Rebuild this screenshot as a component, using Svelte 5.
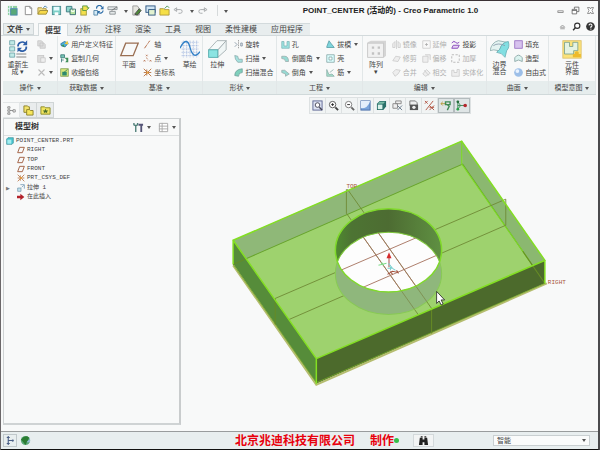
<script>
	const icons = {
		app: '<rect x="1" y="1" width="10" height="10" fill="#8fd0a0"/><path d="M3 1v10M6 1v10M1 4h10M1 8h10" stroke="#e6f3ff"/><rect x="4" y="4" width="7" height="7" fill="#58a978" stroke="#4d88b0"/>',
		page: '<path d="M2.500 1.500h5l2 2v7h-7z" fill="#fff" stroke="#888"/><path d="M7.500 1.500v2h2" fill="none" stroke="#888"/>',
		open: '<path d="M1 10V3h4l1 1h4v2" fill="#f2e08a" stroke="#a8933f"/><path d="M1 10l2-4h9l-2 4z" fill="#f7d94a" stroke="#9f8e38"/><path d="M7 3l2-2 2 2" fill="none" stroke="#3a78a8"/>',
		save: '<rect x="1.500" y="1.500" width="9" height="9" fill="#7fd0c8" stroke="#4f8f94"/><rect x="3" y="2" width="6" height="4" fill="#e9fbff"/><rect x="4" y="8" width="4" height="3" fill="#fff"/>',
		saveAs: '<path d="M1.500 1.500h6v6h-6z" fill="#8fd6cd" stroke="#3b7a80"/><path d="M5.500 4.500h6v6h-6z" fill="#b7e3a0" stroke="#356b6e"/><path d="M7 5v2h3V5" stroke="#fff" fill="none"/>',
		note: '<rect x="2" y="4" width="6" height="7" fill="#f3e04c" stroke="#a39a40"/><path d="M4 6V1h5v2h2L8 6z" fill="#f2e150" stroke="#5a9a42"/>',
		regen: '<path d="M1 6h4v5H1z" fill="#d5eaf5" stroke="#5587a8"/><path d="M4 4a3 3 0 0 1 6-1M11 6a3 3 0 0 1-5 2" fill="none" stroke="#2b6ca8" stroke-width="1.300"/><path d="M11.500 1v3.500H8zM5 10V6.500h3z" fill="#2b6ca8"/>',
		windowIcon: '<path d="M1 2h10v3H1zM3 7h6v3H3z" fill="#e5e9ea" stroke="#8d9598"/><path d="M5 6l6-4" stroke="#777"/>',
		pick: '<path d="M2 1h5l2 3v7H2z" fill="#e6e6e0" stroke="#999"/><path d="M4 10l5-6 2 2-4 5z" fill="#4e8a38" stroke="#444"/>',
		view: '<rect x="1" y="1" width="10" height="7" fill="#cfe4f3" stroke="#2d5580"/><rect x="4" y="5" width="7" height="6" fill="#e2f2d0" stroke="#2d5580"/>',
		folder: '<path d="M1 4h4l1 1h5v6H1z" fill="#f5df47" stroke="#b09a3c"/><path d="M6 4l3-3 2 2" fill="none" stroke="#459050"/>',
		undo: '<path d="M1 5l3-2v4zM3 5h5a2 2 0 0 1 0 4H6" fill="none" stroke="#a5a9ab"/>',
		redo: '<path d="M11 5L8 3v4zM9 5H4a2 2 0 0 0 0 4h2" fill="none" stroke="#a5a9ab"/>',
		min: '<rect x="2.500" y="6.500" width="7" height="2" fill="#fff" stroke="#777"/>',
		restore: '<path d="M4.500 4V1.500h6v6H8" fill="none" stroke="#555"/><path d="M1.500 4.500h6v6h-6zM1.500 6h6" fill="#fff" stroke="#555"/>',
		close: '<path d="M2 2h3l1 2 1-2h3L8 6l2 4H7L6 8l-1 2H2l2-4z" fill="#fff" stroke="#777"/>',
		up: '<path d="M3 7l3-3 3 3zM3 9h6" fill="none" stroke="#888"/>',
		search: '<circle cx="7" cy="5" r="3.500" fill="#fff" stroke="#333" stroke-width="1.500"/><path d="M4.500 7.500L1.500 11" stroke="#333" stroke-width="2"/>',
		help: '<circle cx="6" cy="6" r="5.800" fill="#333"/><path d="M4 4.500a2 2 0 1 1 2.500 2V8" fill="none" stroke="#fff" stroke-width="1.400"/><rect x="5.800" y="8.800" width="1.400" height="1.400" fill="#fff"/>',
		bigRegen: '<path d="M1 1h3v2.500H1zM1 4.700h3v2.500H1zM1 8.400h3v2.500H1z" fill="#bfe9e6" stroke="#6fa4a8" stroke-width=".5"/><path d="M5 9h6M5 10.800h6" stroke="#888" stroke-width=".6"/><path d="M6 4.500A2.500 2.500 0 0 1 10.200 2.500M11 4.500a2.500 2.500 0 0 1-4.300 2" fill="none" stroke="#2c5ea8"/><path d="M11.500.8v3H8.800zM5.700 8V5.300h2.700z" fill="#2c5ea8"/>',
		bigPlane: '<path d="M1 10L4 2.500h7.500L8.500 10z" fill="none" stroke="#9a6f53" stroke-width=".8"/>',
		bigSketch: '<path d="M2 1v10M4 1v10M6 1v10M8 1v10M10 1v10M1 2h10M1 4h10M1 6h10M1 8h10M1 10h10" stroke="#7f9bd4" stroke-width=".4" stroke-dasharray=".6 .6"/><path d="M0 5.500C3-.5 5 1 6 5s3 7 6 2.500" fill="none" stroke="#2f7fc6" stroke-width=".8"/>',
		bigExtrude: '<path d="M6.500 11V6.500L11.500 1v5.500z" fill="#f0f6f6" stroke="#9eaaac" stroke-width=".5"/><path d="M1 6.500L6 1h5.500l-5 5.500z" fill="#f6fafa" stroke="#9eaaac" stroke-width=".5"/><rect x="1" y="6.500" width="5.500" height="4.500" fill="#8be4e2" stroke="#4ba6a8" stroke-width=".5"/>',
		bigPattern: '<path d="M1 2l2-1h9v9l-1 1H1z" fill="#d5d5d5"/><rect x="1" y="2.500" width="9.500" height="8.500" fill="#f1f1f1" stroke="#c5c5c5" stroke-width=".5"/><path d="M3.500 4.500h1.400v1.400H3.500zM7 4.500h1.400v1.400H7zM3.500 8h1.400v1.400H3.500zM7 8h1.400v1.400H7z" fill="#c2c2c2"/>',
		bigBlend: '<path d="M0 7q1-5 5-6l5 1q-4 1-4.500 6L5 7q-3-1-5 0z" fill="#e4f3f1" stroke="#8cacac" stroke-width=".5"/><path d="M6 6q1-4 5-4.500Q12 5 10 7l-1 4Q7 8 4 8z" fill="#82dfe2" stroke="#68b0b4" stroke-width=".5"/><path d="M2 4q3-2 7 0" fill="none" stroke="#89a" stroke-width=".5"/>',
		bigComponent: '<rect x=".500" y="1" width="11" height="10.500" fill="#fbe27a" stroke="#dcc06c" stroke-width=".5"/><path d="M1.500 2h3v2.500h2V2h3v5H7v2H1.500z" fill="#e5f3e2" stroke="#7aa08a" stroke-width=".5"/><path d="M6.500 11V9h1.300a1.200 1.200 0 1 1 2.200 0h1.300v2z" fill="#eebb2b"/>',
		copy: '<path d="M1 1h5l2 2v5H1zM4 4h5l2 2v5H4z" fill="#ddd" stroke="#c4c4c4"/>',
		paste: '<rect x="1" y="2" width="8" height="9" fill="#ddd" stroke="#c4c4c4"/><path d="M5 5h6v6H5z" fill="#eee" stroke="#c4c4c4"/>',
		del: '<path d="M2 2l8 8M10 2l-8 8" stroke="#bbb" stroke-width="1.500"/>',
		udf: '<path d="M1 5l5-3 5 2-4 5-5-1z" fill="#4faed8" stroke="#236a9a"/><path d="M6 5l4-4 1 5z" fill="#f3c83c"/><path d="M2 7l3-1 1 4z" fill="#3b9b52"/>',
		copyGeo: '<path d="M1 1h5v4H1zM2 6v5M2 8h3" fill="#79c5b5" stroke="#2f6f6f"/><path d="M6 5h5v6H7l2-3z" fill="#3f8f59"/>',
		shrink: '<rect x="1" y="1" width="10" height="10" fill="#d7e77c" stroke="#7a9a49"/><path d="M3 5h6v5H3z" fill="#2d8b6e"/><path d="M5 6l5-4" stroke="#275"/>',
		axis: '<path d="M2 11L9 1" stroke="#b36a45" stroke-width="1.300" stroke-dasharray="5 1 2 1"/>',
		points: '<path d="M4 1l2 2M6 1L4 3M1 8l2 2M3 8l-2 2M9 8l2 2M11 8l-2 2M4 5l2 1M6 8h1" stroke="#b36a45"/>',
		csys: '<path d="M1 1l10 10M11 1L1 11M1 6h10M5 2v8" stroke="#b5703f" stroke-width="1.200"/><circle cx="6" cy="6" r="1.500" fill="#e8a23c"/>',
		revolve: '<path d="M6 0v12" stroke="#888" stroke-dasharray="2 1"/><path d="M1 3l3 3-3 3M9 4h2v4H9z" fill="none" stroke="#789"/>',
		sweep: '<path d="M1 2l4 1 1 4h5v4H5L2 7z" fill="#a6e2df" stroke="#8aa8aa"/>',
		sweepBlend: '<path d="M1 10q0-8 10-9v5q-5 0-5 5z" fill="#7fd0bc" stroke="#6c9c98"/>',
		hole: '<path d="M1 2v9h10V2H8v6H4V2z" fill="#9be3e1" stroke="#7fb4b6"/>',
		round: '<path d="M1 3h4q5 0 5 7H6Q6 6 1 6z" fill="#97dbd4" stroke="#98aaaa"/>',
		chamfer: '<path d="M1 3h4l6 5-5 3V8L1 6z" fill="#97dbd4" stroke="#98aaaa"/>',
		draft: '<path d="M1 9l3-8 3 4 4 5H1z" fill="#7ed5dc" stroke="#4f98a2"/>',
		shell: '<path d="M1 1h10v10H1z" fill="#dff" stroke="#7fa0a0"/><path d="M4 4h4v4H4z" fill="#fff" stroke="#7fa0a0"/>',
		rib: '<path d="M1 2v9h10L8 8 4 9zM5 6l5-4" fill="#a6e2cc" stroke="#8aaca8"/>',
		mirror: '<path d="M6 0v12M1 10V5l3-3v8zM11 10V5L8 2v8z" fill="#eee" stroke="#c8c8c8"/>',
		trim: '<path d="M1 9l4-6 6 1-3 6z" fill="#eee" stroke="#c8c8c8"/>',
		merge: '<path d="M1 6l4-4 6 1-3 5-4 3z" fill="#eee" stroke="#c8c8c8"/>',
		extend: '<path d="M1 1h10v10H1z" fill="#f8f8f8" stroke="#c8c8c8"/><path d="M4 6h4M6 4v4" stroke="#aaa"/>',
		offset: '<path d="M1 3h7v8H1zM4 1h7v7" fill="#eee" stroke="#c8c8c8"/>',
		intersect: '<path d="M1 8l5-6 5 5-6 4zM3 3l6 7" fill="#eee" stroke="#c8c8c8"/>',
		project: '<path d="M1 4q3-4 5-1t5 0M1 11l2-4h8l-2 4z" fill="#e8d5f5" stroke="#8a50bc" stroke-width="1.300"/>',
		thicken: '<path d="M1 1h10v10H1z" fill="none" stroke="#aaa" stroke-dasharray="3 2"/>',
		solidify: '<path d="M1 3h3v3h4V2h3v9H1z" fill="#eee" stroke="#c8c8c8"/>',
		fill: '<rect x="1" y="1" width="10" height="10" fill="#d7c2ee" stroke="#8d60bc"/>',
		style: '<path d="M1 10V5q5-7 10 0v5q-5-4-10 0z" fill="#dbf3ef" stroke="#7b9a9a"/>',
		freestyle: '<circle cx="6" cy="6" r="5.800" fill="#9dbfe8"/><circle cx="4.500" cy="4" r="2.500" fill="#e9f3ff"/>',
		tree: '<path d="M1 1h3v2H1zM1 5h3v2H1zM1 9h3v2H1zM8 5h3v3H8zM4 6h4" fill="#fff" stroke="#777"/>',
		folders: '<path d="M1 1h4l1 1h1v6H1z" fill="#f2e36b" stroke="#8b8027"/><path d="M4 5h3l1 1h3v5H4z" fill="#f6e65d" stroke="#8b8027"/>',
		fav: '<path d="M1 2h4l1 1h5v7H1z" fill="#f0e45f" stroke="#8b8a2b"/><path d="M6 4l1 2h2L7.500 7.500 8 9 6 8 4 9l.5-1.500L3 6h2z" fill="#4c6f2b"/>',
		tools: '<path d="M3 4v7M1 1v2l2 1 2-1V1" fill="none" stroke="#4f7f78" stroke-width="1.500"/><path d="M9 4v7M6 3h5" stroke="#557" stroke-width="2"/>',
		columns: '<path d="M1.500 1.500h9v9h-9zM1 4.500h10M1 7.500h10M4.500 1v10" fill="#fff" stroke="#aaa"/>',
		part: '<path d="M1 3l2-2h8v8l-2 2H1z" fill="#48c5cf" stroke="#3a8c96"/><path d="M2 4h6v6H2z" fill="#a5edf0"/>',
		plane: '<path d="M1 10l3-8h7l-3 8z" fill="none" stroke="#9a5433" stroke-width="1.300"/>',
		extrude: '<path d="M1 6h5v5H1z" fill="#c4e4ef" stroke="#6c93a8"/><path d="M5 1h6v6M7 5l3-3" fill="none" stroke="#5a86a8"/>',
		insert: '<path d="M0 4h5V1l6 5-6 5V8H0z" fill="#b3222b"/>',
		fit: '<rect x="1" y="1" width="10" height="10" fill="#dde3f2" stroke="#5b6592"/><circle cx="6" cy="5.500" r="2.500" fill="#fff" stroke="#445"/><path d="M8 8l3 3" stroke="#445" stroke-width="1.500"/>',
		zoomIn: '<circle cx="5" cy="5" r="3.500" fill="#fff" stroke="#555"/><path d="M3.500 5h3M5 3.500v3" stroke="#222"/><path d="M8 8l3 3" stroke="#444" stroke-width="2"/>',
		zoomOut: '<circle cx="5" cy="5" r="3.500" fill="#fff" stroke="#777"/><path d="M3.500 5h3" stroke="#222"/><path d="M8 8l3 3" stroke="#666" stroke-width="2"/>',
		repaint: '<rect x="1" y="1" width="10" height="10" fill="#7aa3db" stroke="#4d6faa"/><path d="M1 1h10Q9 9 1 9z" fill="#e4eefb"/>',
		shade: '<path d="M1 4l3-3h7v6l-3 4H1z" fill="#29706a"/><path d="M2 5h5v5H2z" fill="#d9f2ea"/><path d="M2 4l2-2h6L8 4z" fill="#7bbca8"/>',
		saved: '<path d="M4 1h6v3H4zM1 4h5v5H1z" fill="#eee" stroke="#888"/><path d="M6 6l5 5M11 6l-5 5" stroke="#678"/>',
		camera: '<path d="M2 1h6l2 2v3H2z" fill="#eee" stroke="#777"/><rect x="2" y="5" width="9" height="6" fill="#555"/><circle cx="6.500" cy="8" r="1.800" fill="#eee"/>',
		datum: '<path d="M1 1l3 3M4 1L1 4M10 1L2 11M6 6l5 5M11 6l-5 5M6 8h5" stroke="#b05240"/>',
		annot: '<path d="M1 4h6M3 2L1 4l2 2" stroke="#b69b3a" fill="none"/><path d="M6 2h5v3H6zM8 5l2 2-2 4" fill="none" stroke="#3f8b55" stroke-width="1.500"/>',
		spin: '<path d="M2 1v10M2 6h7M2 2l3 4-3 4" stroke="#3c8a56" fill="none"/><circle cx="2" cy="2" r="1.500" fill="#256b3b"/><circle cx="2" cy="10" r="1.500" fill="#2aa04a"/><circle cx="10" cy="6" r="2" fill="#b3272d"/>',
		navToggle: '<path d="M3 0v12M1 2h4M1 10h4M3 6h6" stroke="#4b5f86" stroke-width="1.500"/><circle cx="9" cy="6" r="1.500" fill="#4b5f86"/>',
		globe: '<circle cx="6" cy="6" r="5" fill="#5aa878"/><path d="M1 5q5-6 9-2L6 11 3 7z" fill="#2b7c32"/><path d="M7 8l4-4v4z" fill="#93b9d8"/>',
		find: '<path d="M2 3h3v2h2V3h3l1 8H7V8H5v3H1z" fill="#222"/><path d="M3 1h2v2H3zM7 1h2v2H7z" fill="#555"/>'
	};

	const quick = ['app', 'page', 'open', 'save', 'saveAs', 'note', 'regen', 'windowIcon', '', 'pick', 'view', 'folder', 'undo', '', 'redo', ''];
	const tabs = ['分析', '注释', '渲染', '工具', '视图', '柔性建模', '应用程序'];

	// stacks: [icon, label, has menu, greyed]
	const groups = [
		{ name: '操作', parts: [
			{ big: 'bigRegen', lines: ['重新生', '成 ▾'] },
			{ rows: [['copy', '', false, true], ['paste', '', true, true], ['del', '', true, true]] }
		] },
		{ name: '获取数据', parts: [
			{ rows: [['udf', '用户定义特征'], ['copyGeo', '复制几何'], ['shrink', '收缩包络']] }
		] },
		{ name: '基准', parts: [
			{ big: 'bigPlane', lines: ['平面'] },
			{ rows: [['axis', '轴'], ['points', '点', true], ['csys', '坐标系']] },
			{ big: 'bigSketch', lines: ['草绘'] }
		] },
		{ name: '形状', parts: [
			{ big: 'bigExtrude', lines: ['拉伸'] },
			{ rows: [['revolve', '旋转'], ['sweep', '扫描', true], ['sweepBlend', '扫描混合']] }
		] },
		{ name: '工程', parts: [
			{ rows: [['hole', '孔'], ['round', '倒圆角', true], ['chamfer', '倒角', true]] },
			{ rows: [['draft', '拔模', true], ['shell', '壳'], ['rib', '筋', true]] }
		] },
		{ name: '编辑', parts: [
			{ big: 'bigPattern', lines: ['阵列', '▾'] },
			{ rows: [['mirror', '镜像', false, true], ['trim', '修剪', false, true], ['merge', '合并', false, true]] },
			{ rows: [['extend', '延伸', false, true], ['offset', '偏移', false, true], ['intersect', '相交', false, true]] },
			{ rows: [['project', '投影'], ['thicken', '加厚', false, true], ['solidify', '实体化', false, true]] }
		] },
		{ name: '曲面', parts: [
			{ big: 'bigBlend', lines: ['边界', '混合'] },
			{ rows: [['fill', '填充'], ['style', '造型'], ['freestyle', '自由式']] }
		] },
		{ name: '模型意图', parts: [{ big: 'bigComponent', lines: ['元件', '界面'] }] }
	];

	const features = [
		['plane', 'RIGHT'],
		['plane', 'TOP'],
		['plane', 'FRONT'],
		['csys', 'PRT_CSYS_DEF'],
		['extrude', '拉伸 1', true],
		['insert', '在此插入']
	];
	const viewTools = ['fit', 'zoomIn', 'zoomOut', 'repaint', 'shade', 'saved', 'camera', 'datum', 'annot', 'spin'];

	let filter = $state('智能');
</script>

{#snippet icon(name, cls = '')}
	<svg class="icon {cls}" viewBox="0 0 12 12" aria-hidden="true">{@html icons[name]}</svg>
{/snippet}

{#snippet caret()}
	<svg class="caret" viewBox="0 0 4 4" aria-hidden="true"><path d="M0 1h4L2 4z" fill="#555" /></svg>
{/snippet}

<div class="window">
	<header class="titlebar">
		<div class="quick">
			{#each quick as name}
				{#if name}
					<button aria-label={name}>{@render icon(name, 'mid')}</button>
				{:else}
					<button class="narrow" aria-label="more">{@render caret()}</button>
				{/if}
			{/each}
		</div>
		<h1>POINT_CENTER (活动的) - Creo Parametric 1.0</h1>
		<div class="win-buttons">
			{#each ['min', 'restore', 'close'] as name}
				<button aria-label={name}>{@render icon(name)}</button>
			{/each}
		</div>
	</header>

	<nav class="tabs">
		<button class="file">文件 {@render caret()}</button>
		<button class="active">模型</button>
		{#each tabs as tab}
			<button class="tab" class:long={tab.length > 2}>{tab}</button>
		{/each}
		<div class="help">
			{#each ['up', 'search', 'help'] as name}
				<button aria-label={name}>{@render icon(name)}</button>
			{/each}
		</div>
	</nav>

	<section class="ribbon">
		{#each groups as group}
			<div class="group">
				<div class="commands">
					{#each group.parts as part}
						{#if part.big}
							<button class="big">
								{@render icon(part.big, 'large')}
								{#each part.lines as line}
									<span>{line}</span>
								{/each}
							</button>
						{:else}
							<div class="stack">
								{#each part.rows as [name, label, menu, off]}
									<button class="small" class:off aria-label={label || name}>
										{@render icon(name)}
										{#if label}<span>{label}</span>{/if}
										{#if menu}{@render caret()}{/if}
									</button>
								{/each}
							</div>
						{/if}
					{/each}
				</div>
				<button class="group-name">{group.name} {@render caret()}</button>
			</div>
		{/each}
	</section>

	<main>
		<aside>
			<div class="nav-tabs">
				<button class="on" aria-label="model tree">{@render icon('tree')}</button>
				<button aria-label="folders">{@render icon('folders', 'mid')}</button>
				<button aria-label="favorites">{@render icon('fav', 'mid')}</button>
			</div>
			<div class="panel">
				<div class="panel-head">
					<h2>模型树</h2>
					<button aria-label="settings">{@render icon('tools', 'mid')}{@render caret()}</button>
					<button aria-label="show">{@render icon('columns', 'mid')}{@render caret()}</button>
				</div>
				<ul>
					<li>{@render icon('part', 'tiny')}POINT_CENTER.PRT</li>
					{#each features as [name, label, parent]}
						<li>
							<span class="twist">{parent ? '▶' : ''}</span>
							{@render icon(name, 'tiny')}{label}
						</li>
					{/each}
				</ul>
			</div>
		</aside>

		<section class="viewport">
			<div class="view-tools">
				{#each viewTools as name, i}
					<button class:pressed={i > 7} aria-label={name}>{@render icon(name, 'mid')}</button>
				{/each}
			</div>
			<svg class="scene" viewBox="182 114 416 316" role="img" aria-label="plate with hole">
				<defs>
					<linearGradient id="bore">
						<stop offset="0" stop-color="#4f8a30" />
						<stop offset=".15" stop-color="#4d7433" />
						<stop offset=".5" stop-color="#4d6c32" />
						<stop offset="1" stop-color="#5f9042" />
					</linearGradient>
					<clipPath id="topRim"><ellipse cx="389" cy="250" rx="53" ry="41.500" /></clipPath>
					<clipPath id="bottomRim"><ellipse cx="389" cy="273" rx="53" ry="41" /></clipPath>
				</defs>
				<polygon points="234,240 462,141 545,260 317,358" fill="#9ed26e" />
				<!-- walls on the far side -->
				<polygon points="234,240 462,141 463,164 234,264" fill="#8fb878" />
				<polygon points="462,141 545,260 545,283 463,164" fill="#8bb870" />
				<path d="M234 264L463 164L545 283" fill="none" stroke="#67a32b" />
				<path d="M462 141V164L530 261" fill="none" stroke="#7ddc24" />
				<!-- datum planes -->
				<g fill="none" stroke="#6f8a35" stroke-width=".9">
					<path d="M506 199L276 298M506 225L276 325M506 199V225" />
					<path d="M348 189L432 308M347 213L432 333M347 189V213" />
				</g>
				<!-- hole -->
				<ellipse cx="389" cy="273" rx="53" ry="41" fill="#8fb77c" stroke="#88ca54" />
				<ellipse cx="389" cy="250" rx="53" ry="41.500" fill="url(#bore)" />
				<g clip-path="url(#topRim)">
					<ellipse cx="389" cy="273" rx="53" ry="41" fill="#fdfdfd" stroke="#7fc83c" />
				</g>
				<g clip-path="url(#bottomRim)">
					<path d="M375 227L432 308M347 213L432 333" fill="none" stroke="#7c8a4c" stroke-width=".8" />
				</g>
				<g clip-path="url(#topRim)">
					<g clip-path="url(#bottomRim)">
						<path d="M506 199L276 298M506 225L276 325M348 189L432 308M347 213L432 333" fill="none" stroke="#a5705c" stroke-width=".9" />
					</g>
				</g>
				<ellipse cx="389" cy="250" rx="53" ry="41.500" fill="none" stroke="#80d92b" stroke-width="1.500" />
				<!-- near walls -->
				<polygon points="234,240 317,358 317,383 234,264" fill="#568c3a" />
				<polygon points="317,358 545,260 545,283 317,383" fill="#4c6a2c" />
				<path d="M234 265L317 384L547 283" fill="none" stroke="#b5bd70" stroke-width="2" />
				<path d="M234 264L317 382L545 283" fill="none" stroke="#75a928" stroke-width=".8" />
				<path d="M234 264L247 258.500M523 251L545 283M432 308V333M276 298V324" fill="none" stroke="#668b25" />
				<path d="M234 240L462 141L545 260L317 358ZM234 240V264M317 358V383M545 260V283" fill="none" stroke="#83df22" stroke-width="1.500" />
				<!-- coordinate system -->
				<path d="M389.500 267V255" stroke="#a84a4a" />
				<path d="M387 258l2.500-6 2.500 6z" fill="#d42a2a" />
				<path d="M379 265l8-2M382 262l2 3" fill="none" stroke="#7fdc8a" />
				<path d="M389 263l4 5 3 2M388 268h5M391 265v5" fill="none" stroke="#7cd0d0" />
				<path d="M388 274l5-3 5 1M391 271l2 3M397 270l2 3" fill="none" stroke="#a2503c" />
				<g fill="#a9573b">
					<text x="347" y="188">TOP</text>
					<text x="548" y="284">RIGHT</text>
				</g>
				<path d="M437 291v12l2.500-2.500 2 4 2-1-2-4h3.500z" fill="#fff" stroke="#222" stroke-width=".8" />
			</svg>
		</section>
	</main>

	<footer>
		<button class="pressed" aria-label="navigator">{@render icon('navToggle')}</button>
		<button aria-label="browser">{@render icon('globe', 'mid')}</button>
		<p>北京兆迪科技有限公司<span>制作</span></p>
		<i class="lamp"></i>
		<button class="find" aria-label="find">{@render icon('find', 'mid')}</button>
		<label class="filter">
			<select bind:value={filter} aria-label="filter">
				<option>智能</option>
			</select>
			{@render caret()}
		</label>
	</footer>
</div>

<style>
	:global(body) {
		margin: 0;
		background: #f8f9f9;
	}

	.window {
		display: flex;
		flex-direction: column;
		min-height: 100vh;
		box-sizing: border-box;
		border: 1px solid #6b6769;
		border-top-color: #3a3235;
		border-right: 2px solid #4b4b4d;
		border-bottom: 2px solid #111;
		background: #f8f9f9;
		color: #444;
		font: 7px/9px 'Liberation Sans', 'Noto Sans CJK SC', sans-serif;
	}

	button {
		display: flex;
		align-items: center;
		justify-content: center;
		margin: 0;
		padding: 0;
		border: 0;
		background: none;
		color: inherit;
		font: inherit;
		white-space: nowrap;
	}

	.icon {
		width: 9px;
		height: 9px;
		flex: none;
	}
	.icon.tiny {
		width: 8px;
		height: 8px;
	}
	.icon.mid {
		width: 11px;
		height: 11px;
	}
	.icon.large {
		width: 20px;
		height: 20px;
	}
	.caret {
		width: 4px;
		height: 4px;
		flex: none;
		margin-left: 3px;
	}

	.titlebar {
		display: flex;
		align-items: center;
		height: 19px;
		padding: 0 2px 0 4px;
	}
	.quick {
		display: flex;
		flex: 0 0 228px;
	}
	.quick button {
		width: 14px;
	}
	.quick button:first-child {
		margin-right: 2px;
	}
	.quick .narrow {
		width: 10px;
	}
	.quick .narrow:last-child {
		width: 14px;
		margin-left: 8px;
		border-left: 1px solid #d6dadb;
	}
	h1 {
		flex: 1;
		margin: 0;
		padding-right: 8px;
		text-align: center;
		font-size: 8px;
		line-height: 10px;
		color: #222;
	}
	.win-buttons {
		display: flex;
		gap: 6px;
		padding-right: 1px;
	}

	.tabs {
		display: flex;
		align-items: flex-end;
		height: 15px;
		padding-left: 2px;
		border-bottom: 1px solid #d3dadc;
		font-size: 8px;
	}
	.tabs > button {
		height: 12px;
		box-sizing: border-box;
		border-top: 1px solid #d3dadc;
		background: #e8edee;
	}
	.tabs > .file {
		width: 31px;
		margin-right: 4px;
		border: 1px solid #cfd6d8;
		font-weight: bold;
	}
	.tabs > .active {
		width: 30px;
		height: 13px;
		margin-bottom: -1px;
		border: 1px solid #d3dadc;
		border-bottom: 0;
		background: #f9fafa;
		font-weight: bold;
	}
	.tab {
		width: 30px;
	}
	.tab.long {
		width: 46px;
	}
	.help {
		display: flex;
		gap: 5px;
		margin-left: auto;
		padding: 0 3px 4px 0;
	}

	.ribbon {
		display: grid;
		grid-template-columns: 55fr 58fr 87fr 74fr 85fr 124fr 62fr 47fr;
		margin: 0 2px;
		border-bottom: 1px solid #d0d9da;
	}
	.group {
		display: flex;
		flex-direction: column;
		min-width: 0;
		border-right: 1px solid #e2e7e8;
	}
	.commands {
		display: flex;
		justify-content: space-around;
		height: 45px;
	}
	.big {
		flex-direction: column;
		justify-content: flex-start;
		min-width: 22px;
		padding-top: 3px;
		line-height: 7px;
	}
	.big .icon {
		margin-bottom: 2px;
	}
	.stack {
		display: grid;
		grid-auto-rows: 14px;
		justify-items: start;
		padding-top: 1px;
	}
	.small span {
		margin-left: 2px;
	}
	.off {
		color: #b0b0b0;
	}
	.group-name {
		height: 13px;
		background: #e6eded;
	}

	main {
		display: flex;
		flex: 1;
	}
	aside {
		display: flex;
		flex-direction: column;
		flex: 0 0 178px;
		margin: 7px 0 6px 2px;
	}
	.nav-tabs {
		display: flex;
	}
	.nav-tabs button {
		width: 17px;
		height: 16px;
		box-sizing: border-box;
		border: 1px solid #d0d5d6;
		border-left: 0;
		background: #e9eced;
	}
	.nav-tabs .on {
		border-color: #e3e6e7;
		background: none;
	}
	.panel {
		flex: 1;
		border: 1px solid #cfd3d4;
		border-right: 2px solid #c9cccd;
		border-bottom-width: 2px;
	}
	.panel-head {
		display: flex;
		align-items: center;
		gap: 7px;
		height: 16px;
		padding: 0 3px 0 11px;
		border-bottom: 1px solid #dde0e1;
	}
	h2 {
		flex: 1;
		margin: 0;
		font-size: 8px;
		line-height: 10px;
		color: #333;
	}
	ul {
		display: grid;
		grid-auto-rows: 1fr;
		height: 66px;
		margin: 0;
		padding: 0 0 0 2px;
		list-style: none;
		font: 6px/8px 'Liberation Mono', 'Noto Sans CJK SC', monospace;
	}
	li {
		display: flex;
		align-items: center;
		gap: 2px;
	}
	.twist {
		width: 9px;
		color: #777;
		font-family: 'DejaVu Sans', sans-serif;
		font-size: 5px;
	}

	.viewport {
		display: flex;
		flex: 1;
		flex-direction: column;
		align-items: center;
		min-width: 0;
	}
	.view-tools {
		display: flex;
		margin-top: 2px;
		border: 1px solid #dde1e2;
		background: #f1f4f4;
	}
	.view-tools button {
		width: 16px;
		height: 15px;
		box-sizing: border-box;
		border-right: 1px solid #dde1e2;
	}
	.view-tools .pressed {
		border: 1px solid #b3bbbd;
		background: #dfe5e6;
	}
	.scene {
		display: block;
		width: 100%;
	}
	.scene text {
		font: 6px 'Liberation Mono', monospace;
	}

	footer {
		display: flex;
		align-items: center;
		height: 17px;
		padding: 0 8px 0 2px;
		border-top: 1px solid #999c9d;
		background: #e8eeef;
	}
	footer > button {
		width: 14px;
		height: 13px;
		margin-right: 1px;
	}
	footer .pressed {
		border: 1px solid #c0c8cb;
		box-sizing: border-box;
	}
	footer p {
		flex: 1;
		margin: 0;
		text-align: right;
		color: #e8000c;
		font: bold 12px/14px 'Noto Sans CJK SC', serif;
		white-space: nowrap;
	}
	footer span {
		margin-left: 15px;
	}
	.lamp {
		width: 5px;
		height: 5px;
		margin-right: 14px;
		border-radius: 50%;
		background: #35c04a;
	}
	footer .find {
		width: 21px;
		margin-right: 59px;
		border: 1px solid #d3d9db;
		box-sizing: border-box;
		background: #f2f4f4;
	}
	.filter {
		display: flex;
		align-items: center;
		flex: 0 0 97px;
		height: 11px;
		box-sizing: border-box;
		padding-right: 3px;
		border: 1px solid #c9cfd1;
		background: #fafbfb;
	}
	select {
		flex: 1;
		padding: 0 3px;
		border: 0;
		appearance: none;
		background: none;
		color: inherit;
		font: inherit;
	}
</style>
